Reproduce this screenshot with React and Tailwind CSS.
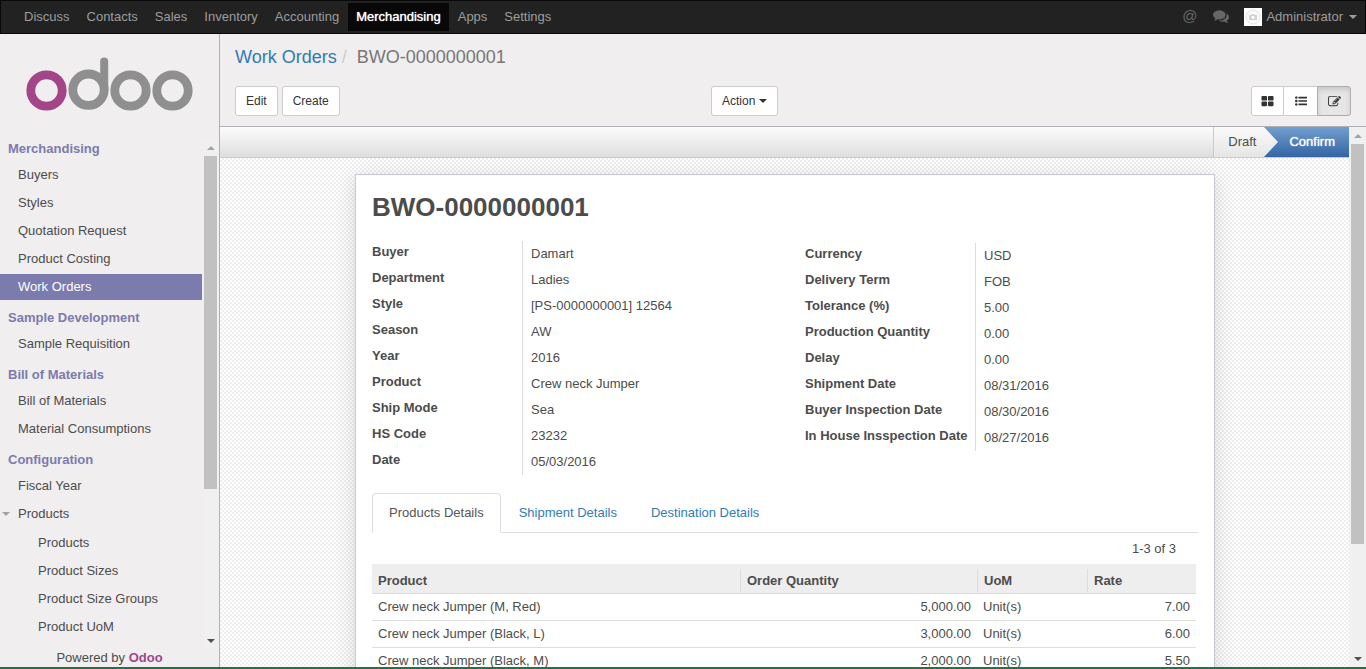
const EDIT =
  "M888 1184l116-116-152-152-116 116v56h96v96h56zm440-720q-16-16-33 1l-350 350q-17 17-1 33t33-1l350-350q17-17 1-33zm80 594v190q0 119-84.5 203.5t-203.5 84.5h-832q-119 0-203.5-84.5t-84.5-203.5v-832q0-119 84.5-203.5t203.5-84.5h832q63 0 117 25 15 7 18 23 3 17-9 29l-49 49q-14 14-32 8-23-6-45-6h-832q-66 0-113 47t-47 113v832q0 66 47 113t113 47h832q66 0 113-47t47-113v-126q0-13 9-22l64-64q15-15 35-7t20 29zm-96-738l288 288-672 672h-288v-288zm444 132l-92 92-288-288 92-92q28-28 68-28t68 28l152 152q28 28 28 68t-28 68z";
const KANBAN =
  "M832 1024v384q0 52-38 90t-90 38h-512q-52 0-90-38t-38-90v-384q0-52 38-90t90-38h512q52 0 90 38t38 90zm0-768v384q0 52-38 90t-90 38h-512q-52 0-90-38t-38-90v-384q0-52 38-90t90-38h512q52 0 90 38t38 90zm896 768v384q0 52-38 90t-90 38h-512q-52 0-90-38t-38-90v-384q0-52 38-90t90-38h512q52 0 90 38t38 90zm0-768v384q0 52-38 90t-90 38h-512q-52 0-90-38t-38-90v-384q0-52 38-90t90-38h512q52 0 90 38t38 90z";
const LIST =
  "M384 1408q0 80-56 136t-136 56-136-56-56-136 56-136 136-56 136 56 56 136zm0-512q0 80-56 136t-136 56-136-56-56-136 56-136 136-56 136 56 56 136zm1408 416v192q0 13-9.5 22.5t-22.5 9.5h-1216q-13 0-22.5-9.5t-9.5-22.5v-192q0-13 9.5-22.5t22.5-9.5h1216q13 0 22.5 9.5t9.5 22.5zm-1408-928q0 80-56 136t-136 56-136-56-56-136 56-136 136-56 136 56 56 136zm1408 416v192q0 13-9.5 22.5t-22.5 9.5h-1216q-13 0-22.5-9.5t-9.5-22.5v-192q0-13 9.5-22.5t22.5-9.5h1216q13 0 22.5 9.5t9.5 22.5zm0-512v192q0 13-9.5 22.5t-22.5 9.5h-1216q-13 0-22.5-9.5t-9.5-22.5v-192q0-13 9.5-22.5t22.5-9.5h1216q13 0 22.5 9.5t9.5 22.5z";
const COMMENTS =
  "M1408 768q0 139-94 257t-256.5 186.5-353.5 68.5q-86 0-176-16-124 88-278 128-36 9-86 16h-3q-11 0-20.5-8t-11.5-21q-1-3-1-6.5t.5-6.5 2-6l2.5-5 3.5-5.5 4-5 4.5-5 4-4.5q5-6 23-25t26-29.5 22.5-29 25-38.5 20.5-44q-124-72-195-177t-71-224q0-139 94-257t256.5-186.5 353.5-68.5 353.5 68.5 256.5 186.5 94 257zm384 256q0 120-71 224.5t-195 176.5q10 24 20.5 44t25 38.5 22.5 29 26 29.5 23 25q1 1 4 4.5t4.5 5 4 5 3.5 5.5l2.5 5 2 6 .5 6.5-1 6.5q-3 14-13 22t-22 7q-50-7-86-16-154-40-278-128-90 16-176 16-271 0-472-132 58 4 88 4 161 0 309-45t264-129q125-92 192-212t67-254q0-77-23-152 129 71 204 178t75 230z";

function Glyph({ d, className }) {
  return (
    <svg viewBox="0 0 1792 1792" fill="currentColor" aria-hidden="true" className={className}>
      <path d={d} />
    </svg>
  );
}

function Caret({ up = false, className }) {
  return (
    <svg viewBox="0 0 8 4" fill="currentColor" aria-hidden="true" className={`h-1 w-2 ${className || ""}`}>
      <path d={up ? "M0 4h8L4 0z" : "M0 0h8L4 4z"} />
    </svg>
  );
}

function Logo() {
  return (
    <svg viewBox="0 0 168 54" className="block h-[54px] w-[168px]" role="img" aria-label="odoo">
      <g fill="none" strokeWidth="8.800">
        <circle cx="20.5" cy="33.5" r="15.700" stroke="#a24689" />
        <g stroke="#8f8f8f">
          <circle cx="62.5" cy="32.700" r="15.700" />
          <circle cx="104.5" cy="33.5" r="15.700" />
          <circle cx="146.5" cy="33.5" r="15.700" />
          <path d="M78.200 33V4.500" strokeWidth="8" strokeLinecap="round" />
        </g>
      </g>
    </svg>
  );
}

const APPS = ["Discuss", "Contacts", "Sales", "Inventory", "Accounting", "Merchandising", "Apps", "Settings"];

function TopBar() {
  return (
    <nav className="flex h-[34px] shrink-0 items-center justify-between border border-[#080808] bg-[#222] pr-2 pl-[15px] text-[#9d9d9d]">
      <ul className="flex gap-px">
        {APPS.map((name) => (
          <li key={name}>
            <a
              href="#"
              className={
                name === "Merchandising"
                  ? "block bg-[#080808] px-2 py-1 leading-5 text-white [text-shadow:0_0_1px_white]"
                  : "block px-2 py-1 leading-5"
              }
            >
              {name}
            </a>
          </li>
        ))}
      </ul>
      <div className="flex items-center">
        <div className="mr-[15px] flex items-center gap-4 pb-0.5 text-[#666]">
          <a href="#" aria-label="Mentions" className="text-[15px] leading-5">@</a>
          <a href="#" aria-label="Conversations">
            <Glyph d={COMMENTS} className="size-4" />
          </a>
        </div>
        <button type="button" className="flex items-center gap-1">
          <svg viewBox="0 0 18 18" className="size-[18px]" aria-hidden="true">
            <rect width="18" height="18" fill="#fff" />
            <circle cx="9" cy="9" r="7" fill="#fafafa" stroke="#e4e4e4" />
            <path d="M5 7h2l1-1h2l1 1h2v5H5z" fill="#d2d2d2" />
            <circle cx="9" cy="9.300" r="1.500" fill="#fff" />
          </svg>
          Administrator
          <Caret className="ml-0.5" />
        </button>
      </div>
    </nav>
  );
}

const MENU = [
  { title: "Merchandising", items: ["Buyers", "Styles", "Quotation Request", "Product Costing", "Work Orders"] },
  { title: "Sample Development", items: ["Sample Requisition"] },
  { title: "Bill of Materials", items: ["Bill of Materials", "Material Consumptions"] },
  {
    title: "Configuration",
    items: ["Fiscal Year", "Products"],
    children: ["Products", "Product Sizes", "Product Size Groups", "Product UoM"],
  },
];

function Scrollbar({ thumb }) {
  return (
    <div aria-hidden="true" className="flex w-[17px] shrink-0 flex-col items-center bg-[#f1f0f0]">
      <div className="flex h-[17px] shrink-0 items-center text-[#a3a3a3]">
        <Caret up />
      </div>
      <div className="min-h-0 w-full flex-1 px-0.5">
        <div className={`bg-[#c1c1c1] ${thumb}`} />
      </div>
      <div className="flex h-[17px] shrink-0 items-center text-[#505050]">
        <Caret />
      </div>
    </div>
  );
}

function Sidebar() {
  return (
    <aside className="flex w-[220px] shrink-0 flex-col border-r border-[#afafb6] bg-[#f0eeee]">
      <a href="#" className="flex shrink-0 justify-center pt-[23px] pb-7">
        <Logo />
      </a>
      <div className="flex min-h-0 flex-1">
        <div className="flex min-w-0 flex-1 flex-col gap-2 overflow-hidden">
          {MENU.map((section) => (
            <section key={section.title}>
              <h2 className="px-2 text-[13px] leading-5 font-bold text-[#7c7bad]">{section.title}</h2>
              <ul className="mt-[3px] flex flex-col gap-0.5">
                {section.items.map((item) => (
                  <li key={item}>
                    <a
                      href="#"
                      className={
                        item === "Work Orders"
                          ? "flex h-[26px] items-center bg-[#7c7bad] pl-[18px] text-white"
                          : "flex h-[26px] items-center pl-0.5"
                      }
                    >
                      {item !== "Work Orders" && (
                        <span className="flex w-4 items-center">
                          {item === "Products" && <Caret className="text-[#a3a3a3]" />}
                        </span>
                      )}
                      {item}
                    </a>
                  </li>
                ))}
              </ul>
              {section.children && (
                <ul className="mt-[3px] flex flex-col gap-0.5">
                  {section.children.map((item) => (
                    <li key={item}>
                      <a href="#" className="flex h-[26px] items-center pl-[38px]">{item}</a>
                    </li>
                  ))}
                </ul>
              )}
            </section>
          ))}
        </div>
        <Scrollbar thumb="h-[70%]" />
      </div>
      <p className="shrink-0 text-center leading-[18px]">
        Powered by{" "}
        <a href="#" className="font-bold text-[#a24689]">Odoo</a>
      </p>
    </aside>
  );
}

const BUTTON = "flex h-[30px] items-center rounded-[3px] border border-[#ccc] bg-white px-[10px] text-xs text-[#333]";

function ControlPanel() {
  return (
    <header className="shrink-0 border-b border-[#afafb6] bg-[#f0eeee] px-[15px] pt-[10px] pb-[10px]">
      <ol className="flex text-[18px] leading-[26px]">
        <li><a href="#" className="text-[#337ab7]">Work Orders</a></li>
        <li className="px-[5px] text-[#ccc]">/</li>
        <li className="pl-[5px] text-[#777]">BWO-0000000001</li>
      </ol>
      <div className="mt-4 grid grid-cols-[476px_1fr_auto]">
        <div className="flex gap-1">
          <button type="button" className={BUTTON}>Edit</button>
          <button type="button" className={BUTTON}>Create</button>
        </div>
        <div className="flex">
          <button type="button" className={`${BUTTON} gap-1`}>
            Action
            <Caret />
          </button>
        </div>
        <div className="flex">
          <button type="button" aria-label="Kanban" className="flex h-[30px] w-[33px] items-center justify-center rounded-l-[3px] border border-[#ccc] bg-white text-[#333]">
            <Glyph d={KANBAN} className="size-[13px]" />
          </button>
          <button type="button" aria-label="List" className="flex h-[30px] w-[33px] items-center justify-center border-y border-[#ccc] bg-white text-[#333]">
            <Glyph d={LIST} className="size-3" />
          </button>
          <button type="button" aria-label="Form" aria-pressed="true" className="flex h-[30px] w-[34px] items-center justify-center rounded-r-[3px] border border-[#adadad] bg-[#e6e6e6] text-[#333] shadow-[inset_0_3px_5px_rgba(0,0,0,0.125)]">
            <Glyph d={EDIT} className="size-[13px]" />
          </button>
        </div>
      </div>
    </header>
  );
}

function StatusBar() {
  return (
    <div className="flex h-[31px] shrink-0 justify-end border-b border-[#cacaca] bg-linear-to-b from-[#fcfcfc] to-[#dedede]">
      <div className="flex items-center border-l border-[#cacaca] bg-linear-to-b from-[#fafafa] to-[#e6e6e6] pr-2 pl-[14px]">Draft</div>
      <div className="flex items-center bg-linear-to-b from-[#729fcf] to-[#3465a4] pr-[14px] text-white">
        <svg viewBox="0 0 14 30" preserveAspectRatio="none" className="mr-[11px] h-full w-[14px]" aria-hidden="true">
          <linearGradient id="step" x1="0" y1="0" x2="0" y2="1">
            <stop offset="0" stopColor="#fafafa" />
            <stop offset="1" stopColor="#e6e6e6" />
          </linearGradient>
          <path d="M0 0l14 15L0 30z" fill="url(#step)" />
        </svg>
        <span className="[text-shadow:0_0_1px_white]">Confirm</span>
      </div>
    </div>
  );
}

const LEFT = [
  ["Buyer", "Damart"],
  ["Department", "Ladies"],
  ["Style", "[PS-0000000001] 12564"],
  ["Season", "AW"],
  ["Year", "2016"],
  ["Product", "Crew neck Jumper"],
  ["Ship Mode", "Sea"],
  ["HS Code", "23232"],
  ["Date", "05/03/2016"],
];
const RIGHT = [
  ["Currency", "USD"],
  ["Delivery Term", "FOB"],
  ["Tolerance (%)", "5.00"],
  ["Production Quantity", "0.00"],
  ["Delay", "0.00"],
  ["Shipment Date", "08/31/2016"],
  ["Buyer Inspection Date", "08/30/2016"],
  ["In House Insspection Date", "08/27/2016"],
];

function FieldGroup({ fields, columns }) {
  return (
    <dl>
      {fields.map(([label, value]) => (
        <div key={label} className={`grid h-[26px] ${columns}`}>
          <dt className="leading-[22px] font-bold whitespace-nowrap">{label}</dt>
          <dd className="border-l border-[#ddd] pl-2 leading-[26px]">{value}</dd>
        </div>
      ))}
    </dl>
  );
}

const TABS = ["Products Details", "Shipment Details", "Destination Details"];
const ROWS = [
  ["Crew neck Jumper (M, Red)", "5,000.00", "7.00"],
  ["Crew neck Jumper (Black, L)", "3,000.00", "6.00"],
  ["Crew neck Jumper (Black, M)", "2,000.00", "5.50"],
];

function HeadCell({ children, className, first }) {
  return (
    <th className={`pt-[5px] pb-px text-left font-bold ${className || ""}`}>
      <div className={first ? "px-[6px] leading-[23px]" : "border-l border-[#ddd] px-[6px] leading-[23px]"}>{children}</div>
    </th>
  );
}

function ProductTable() {
  return (
    <div className="pr-0.5">
      <p className="pr-5 text-right leading-[31px]">1-3 of 3</p>
      <table className="w-full table-fixed border-collapse">
        <thead>
          <tr className="border-b border-[#ddd] bg-[#eee]">
            <HeadCell first>Product</HeadCell>
            <HeadCell className="w-[237px]">Order Quantity</HeadCell>
            <HeadCell className="w-[110px]">UoM</HeadCell>
            <HeadCell className="w-[109px]">Rate</HeadCell>
          </tr>
        </thead>
        <tbody>
          {ROWS.map(([name, quantity, rate]) => (
            <tr key={name} className="h-[27px] border-b border-[#ddd]">
              <td className="px-[6px]">{name}</td>
              <td className="px-[6px] text-right">{quantity}</td>
              <td className="px-[6px]">Unit(s)</td>
              <td className="px-[6px] text-right">{rate}</td>
            </tr>
          ))}
        </tbody>
      </table>
    </div>
  );
}

function Sheet() {
  return (
    <article className="mx-auto max-w-[860px] border border-[#c8c8d3] bg-white px-4 pt-[14px] pb-10 shadow-[0_4px_20px_rgba(0,0,0,0.15)]">
      <h1 className="text-[26px] leading-9 font-bold">BWO-0000000001</h1>
      <div className="mt-4 grid grid-cols-2 gap-10">
        <FieldGroup fields={LEFT} columns="grid-cols-[150px_1fr]" />
        <div className="pt-0.5">
          <FieldGroup fields={RIGHT} columns="grid-cols-[170px_1fr]" />
        </div>
      </div>
      <div role="tablist" className="mt-[18px] flex gap-0.5 border-b border-[#ddd]">
        {TABS.map((tab, index) => (
          <button
            key={tab}
            type="button"
            role="tab"
            aria-selected={index === 0}
            className={
              index === 0
                ? "-mb-px h-10 rounded-t border border-b-white border-[#ddd] bg-white px-4 text-[#555]"
                : "h-[39px] px-4 text-[#337ab7]"
            }
          >
            {tab}
          </button>
        ))}
      </div>
      <ProductTable />
    </article>
  );
}

export default function App() {
  return (
    <div className="flex h-screen flex-col overflow-hidden font-['Liberation_Sans',Arial,sans-serif] text-[13px] text-[#4c4c4c]">
      <TopBar />
      <div className="flex min-h-0 flex-1">
        <Sidebar />
        <main className="flex min-w-0 flex-1 flex-col">
          <ControlPanel />
          <div className="flex min-h-0 flex-1">
            <div className="flex min-w-0 flex-1 flex-col overflow-hidden">
              <StatusBar />
              <div className="min-h-0 flex-1 overflow-hidden bg-white bg-[repeating-conic-gradient(#eeeeee_0_25%,#fff_0_50%)] bg-size-[4px_4px] pt-4 pl-px">
                <Sheet />
              </div>
            </div>
            <Scrollbar thumb="h-[79%]" />
          </div>
        </main>
      </div>
      <footer className="h-0.5 shrink-0 bg-[#217346]" />
    </div>
  );
}
